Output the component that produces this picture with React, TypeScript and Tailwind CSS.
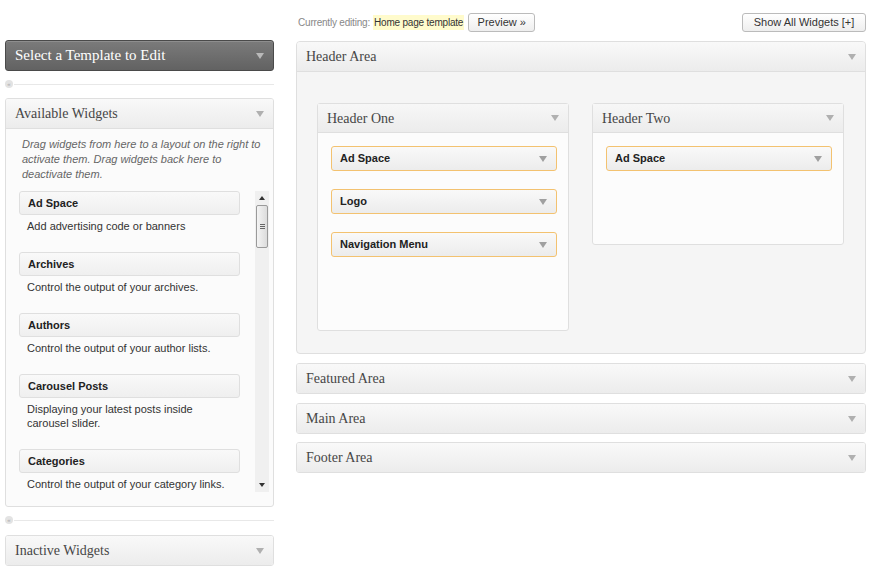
import React from 'react';

const serif = { fontFamily: '"Liberation Serif", Georgia, serif' };

function Arrow({ className = 'text-[#9a9a9a]' }: { className?: string }) {
  return (
    <svg width="8" height="6" viewBox="0 0 8 6" className={className}>
      <path d="M0 0 L8 0 L4 6 Z" fill="currentColor" />
    </svg>
  );
}

function PanelHeader({ title, open }: { title: string; open?: boolean }) {
  return (
    <div
      className={`flex items-center justify-between bg-linear-to-b from-[#f9f9f9] to-[#ececec] pl-[9px] pr-[9px] text-[14px] text-[#464646] ${open ? 'h-[30px] border-b border-[#dfdfdf]' : 'h-[29px]'}`}
      style={serif}
    >
      <span>{title}</span>
      <Arrow className="text-[#b0b0b0]" />
    </div>
  );
}

function Divider() {
  return (
    <div className="flex h-[10px] items-center">
      <div className="flex h-[8px] w-[8px] items-center justify-center rounded-full bg-[#e3e3e3] text-[6px] leading-none text-[#aaa]">
        «
      </div>
      <div className="ml-[1px] h-px flex-1 bg-[#e8e8e8]" />
    </div>
  );
}

const available = [
  { name: 'Ad Space', desc: 'Add advertising code or banners' },
  { name: 'Archives', desc: 'Control the output of your archives.' },
  { name: 'Authors', desc: 'Control the output of your author lists.' },
  { name: 'Carousel Posts', desc: 'Displaying your latest posts inside carousel slider.' },
  { name: 'Categories', desc: 'Control the output of your category links.' },
];

function ActiveWidget({ name }: { name: string }) {
  return (
    <div className="flex h-[25px] items-center justify-between rounded-[3px] border border-[#f3c270] bg-linear-to-b from-[#f9f9f9] to-[#ececec] pl-[8px] pr-[9px]">
      <span className="text-[11px] font-bold text-[#222]">{name}</span>
      <Arrow className="text-[#a0a0a0]" />
    </div>
  );
}

function SubArea({ title, widgets }: { title: string; widgets: string[] }) {
  return (
    <div className="w-[252px] self-start rounded-[3px] border border-[#dfdfdf] bg-[#fcfcfc]">
      <div
        className="flex h-[29px] items-center justify-between border-b border-[#dfdfdf] bg-linear-to-b from-[#f7f7f7] to-[#ececec] pl-[9px] pr-[9px] text-[14px] text-[#464646]"
        style={serif}
      >
        <span>{title}</span>
        <Arrow className="text-[#b0b0b0]" />
      </div>
      <div className="flex flex-col gap-[18px] pl-[13px] pr-[11px] pt-[13px] pb-[73px]">
        {widgets.map((w) => (
          <ActiveWidget key={w} name={w} />
        ))}
      </div>
    </div>
  );
}

export default function App() {
  return (
    <div
      className="flex h-[575px] w-[875px] gap-[22px] overflow-hidden bg-white pl-[5px]"
      style={{ fontFamily: '"Liberation Sans", Arial, sans-serif' }}
    >
      {/* left column */}
      <div className="flex w-[269px] flex-col pt-[40px]">
        <div
          className="flex h-[31px] items-center justify-between rounded-[3px] border border-[#4a4a4a] bg-linear-to-b from-[#7b7b7b] to-[#626262] pl-[9px] pr-[9px] text-[15px] text-white shadow-[inset_0_1px_0_#8e8e8e]"
          style={serif}
        >
          <span>Select a Template to Edit</span>
          <Arrow className="text-[#b9b9b9]" />
        </div>
        <div className="mt-[8px]">
          <Divider />
        </div>
        <div className="mt-[9px] flex h-[409px] flex-col overflow-hidden rounded-[3px] border border-[#dfdfdf] bg-[#fbfbfb]">
          <PanelHeader title="Available Widgets" open />
          <p className="pl-[16px] pr-[8px] pt-[8px] text-[11px] italic leading-[15px] text-[#666]">
            Drag widgets from here to a layout on the right to activate them. Drag widgets back here to deactivate them.
          </p>
          <div className="mt-[9px] flex h-[301px] pl-[13px] pr-[4px]">
            <div className="flex-1 overflow-hidden pr-[15px]">
              {available.map((w) => (
                <div key={w.name}>
                  <div className="flex h-[24px] items-center rounded-[3px] border border-[#dfdfdf] bg-linear-to-b from-[#f9f9f9] to-[#efefef] pl-[8px] text-[11px] font-bold text-[#222]">
                    {w.name}
                  </div>
                  <p className="pl-[8px] pr-[10px] pt-[4px] pb-[19px] text-[11px] leading-[14px] text-[#333]">
                    {w.desc}
                  </p>
                </div>
              ))}
            </div>
            <div className="flex w-[14px] flex-col items-center bg-[#f0f0f0]">
              <div className="flex h-[14px] items-center justify-center">
                <svg width="6" height="4" viewBox="0 0 6 4">
                  <path d="M0 4 L6 4 L3 0 Z" fill="#333" />
                </svg>
              </div>
              <div className="flex h-[43px] w-[12px] flex-col items-center justify-center gap-[1px] rounded-[2px] border border-[#9a9a9a] bg-linear-to-r from-[#f4f4f4] to-[#dcdcdc]">
                <div className="h-px w-[5px] bg-[#666]" />
                <div className="h-px w-[5px] bg-[#666]" />
                <div className="h-px w-[5px] bg-[#666]" />
              </div>
              <div className="flex-1" />
              <div className="flex h-[14px] items-center justify-center">
                <svg width="6" height="4" viewBox="0 0 6 4">
                  <path d="M0 0 L6 0 L3 4 Z" fill="#333" />
                </svg>
              </div>
            </div>
          </div>
        </div>
        <div className="mt-[8px]">
          <Divider />
        </div>
        <div className="mt-[10px] overflow-hidden rounded-[3px] border border-[#dfdfdf]">
          <PanelHeader title="Inactive Widgets" />
        </div>
      </div>

      {/* right column */}
      <div className="flex w-[570px] flex-col pt-[12px]">
        <div className="flex h-[20px] items-center justify-between">
          <div className="flex items-center text-[10px] tracking-[-0.2px] text-[#888]">
            <span className="ml-[2px]">Currently editing:</span>
            <span className="ml-[3px] bg-[#fffbcc] px-[1px] text-[#333]">Home page template</span>
            <button className="ml-[4px] flex h-[19px] w-[67px] items-center justify-center rounded-[3px] border border-[#bbb] bg-linear-to-b from-white to-[#eeeeee] text-[11px] tracking-normal text-[#333]">
              Preview »
            </button>
          </div>
          <button className="flex h-[19px] w-[124px] items-center justify-center rounded-[3px] border border-[#bbb] bg-linear-to-b from-white to-[#eeeeee] text-[11px] text-[#333]">
            Show All Widgets [+]
          </button>
        </div>

        <div className="mt-[9px] overflow-hidden rounded-[4px] border border-[#dfdfdf] bg-[#f5f5f5]">
          <PanelHeader title="Header Area" open />
          <div className="flex h-[281px] gap-[23px] pl-[20px] pt-[31px]">
            <SubArea title="Header One" widgets={['Ad Space', 'Logo', 'Navigation Menu']} />
            <SubArea title="Header Two" widgets={['Ad Space']} />
          </div>
        </div>

        <div className="mt-[9px] overflow-hidden rounded-[3px] border border-[#dfdfdf]">
          <PanelHeader title="Featured Area" />
        </div>
        <div className="mt-[9px] overflow-hidden rounded-[3px] border border-[#dfdfdf]">
          <PanelHeader title="Main Area" />
        </div>
        <div className="mt-[8px] overflow-hidden rounded-[3px] border border-[#dfdfdf]">
          <PanelHeader title="Footer Area" />
        </div>
      </div>
    </div>
  );
}
